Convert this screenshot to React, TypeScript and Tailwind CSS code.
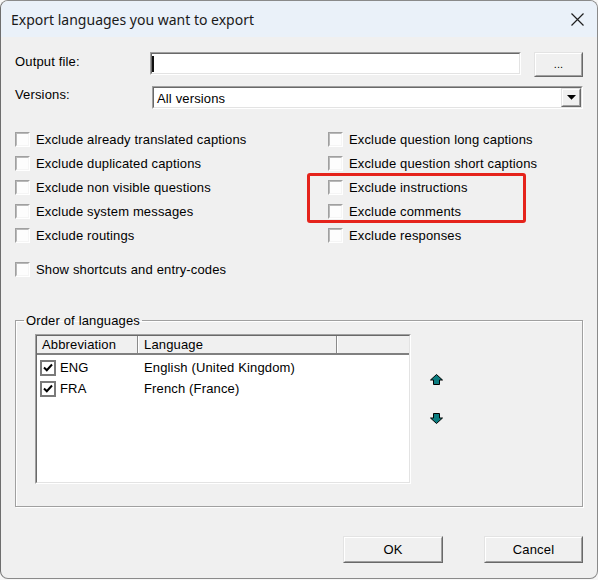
import React from "react";

const sunkenOuter =
  "border border-t-[#a0a0a0] border-l-[#a0a0a0] border-b-white border-r-white";
const sunkenInner =
  "border border-t-[#696969] border-l-[#696969] border-b-[#e3e3e3] border-r-[#e3e3e3]";
const raisedOuter =
  "border border-t-[#e3e3e3] border-l-[#e3e3e3] border-b-[#696969] border-r-[#696969]";
const raisedInner =
  "border border-t-white border-l-white border-b-[#a0a0a0] border-r-[#a0a0a0]";

function Check({ checked = false, big = false }: { checked?: boolean; big?: boolean }) {
  if (big) {
    return (
      <div className="w-[16px] h-[16px] border-2 border-[#7a7a7a] bg-white flex items-center justify-center shrink-0">
        {checked && (
          <svg width="10" height="9" viewBox="0 0 10 9">
            <path d="M1 4.5 L3.8 7.2 L9 1.5" fill="none" stroke="#000" strokeWidth="2" />
          </svg>
        )}
      </div>
    );
  }
  return (
    <div className={`w-[15px] h-[15px] shrink-0 ${sunkenOuter}`}>
      <div className="w-full h-full border border-t-[#b9b9b9] border-l-[#b9b9b9] border-b-[#f5f5f5] border-r-[#f5f5f5] bg-[#fdfdfd]" />
    </div>
  );
}

function CheckRow({ label }: { label: string }) {
  return (
    <div className="h-[24px] flex items-center gap-[6px]">
      <Check />
      <span>{label}</span>
    </div>
  );
}

function Button({ label, w }: { label: string; w: string }) {
  return (
    <div className={`${w} h-[27px] ${raisedOuter}`}>
      <div className={`w-full h-full ${raisedInner} flex items-center justify-center`}>{label}</div>
    </div>
  );
}

function Arrow({ down = false }: { down?: boolean }) {
  return (
    <svg width="13" height="11" viewBox="0 0 13 11" style={down ? { transform: "scaleY(-1)" } : undefined}>
      <polygon
        points="6.5,0.5 12.5,6 9.5,6 9.5,10.5 3.5,10.5 3.5,6 0.5,6"
        fill="#0b7c7f"
        stroke="#000"
        strokeWidth="1"
        strokeLinejoin="miter"
      />
    </svg>
  );
}

export default function App() {
  return (
    <div className="w-[598px] h-[580px] bg-[#f7f7f7] [font-family:'Liberation_Sans',Arial,sans-serif] text-[13px] leading-[15px] tracking-[0.15px] text-black">
      <div className="relative w-[598px] h-[579px] rounded-[8px] border border-[#8a8a8a] border-l-[#6e6e6e] bg-[#f0f0f0] overflow-hidden flex flex-col">
        {/* title bar */}
        <div className="h-[36px] shrink-0 bg-[#eaf1f9] flex items-center justify-between pl-[10px] pr-[13px]">
          <span className="[font-family:'Noto_Sans',sans-serif] text-[14px] tracking-normal leading-[20px] text-[#1a1a1a] mt-[1px]">
            Export languages you want to export
          </span>
          <svg width="13" height="13" viewBox="0 0 13 13">
            <path d="M0.5 0.5 L12.5 12.5 M12.5 0.5 L0.5 12.5" stroke="#1f1f1f" strokeWidth="1.2" />
          </svg>
        </div>

        {/* body */}
        <div className="flex flex-col pl-[14px] pr-[14px]">
          {/* output file */}
          <div className="flex items-start mt-[15px]">
            <div className="w-[135px] mt-[2px]">Output file:</div>
            <div className={`w-[371px] h-[23px] ${sunkenOuter}`}>
              <div className={`w-full h-full ${sunkenInner} bg-white flex items-center`}>
                <div className="w-[2px] h-[16px] bg-[#111] ml-[0px]" />
              </div>
            </div>
            <div className="ml-[13px]">
              <div className={`w-[49px] h-[25px] ${raisedOuter}`}>
                <div className={`w-full h-full ${raisedInner} flex items-center justify-center text-[11px]`}>
                  ...
                </div>
              </div>
            </div>
          </div>

          {/* versions */}
          <div className="flex items-start mt-[9px]">
            <div className="w-[137px] mt-[1px]">Versions:</div>
            <div className={`w-[431px] h-[23px] ${sunkenOuter}`}>
              <div className={`w-full h-full ${sunkenInner} bg-white flex items-center justify-between`}>
                <span className="pl-[3px] mt-[2px]">All versions</span>
                <div className={`w-[20px] h-[19px] ${raisedOuter}`}>
                  <div className={`w-full h-full ${raisedInner} bg-[#f0f0f0] flex items-center justify-center`}>
                    <svg width="9" height="5" viewBox="0 0 9 5">
                      <polygon points="0,0 9,0 4.5,4.8" fill="#000" />
                    </svg>
                  </div>
                </div>
              </div>
            </div>
          </div>

          {/* checkboxes */}
          <div className="grid grid-cols-[313px_1fr] mt-[18px]">
            <div className="flex flex-col">
              <CheckRow label="Exclude already translated captions" />
              <CheckRow label="Exclude duplicated captions" />
              <CheckRow label="Exclude non visible questions" />
              <CheckRow label="Exclude system messages" />
              <CheckRow label="Exclude routings" />
            </div>
            <div className="flex flex-col">
              <CheckRow label="Exclude question long captions" />
              <CheckRow label="Exclude question short captions" />
              <CheckRow label="Exclude instructions" />
              <CheckRow label="Exclude comments" />
              <CheckRow label="Exclude responses" />
            </div>
          </div>
          <div className="mt-[10px]">
            <CheckRow label="Show shortcuts and entry-codes" />
          </div>

          {/* group box */}
          <fieldset className="mt-[32px] w-[568px] border border-[#a0a0a0] shadow-[inset_1px_1px_0_#fff,1px_1px_0_#fff] p-0 m-0">
            <legend className="ml-[8px] px-[2px] leading-[15px]">Order of languages</legend>
            <div className="flex ml-[19px] mt-[6px] mb-[22px]">
              <div className={`w-[376px] h-[150px] ${sunkenOuter}`}>
                <div className={`w-full h-full ${sunkenInner} bg-white flex flex-col`}>
                  <div className="h-[19px] flex bg-[#f0f0f0] border-b-2 border-b-[#808080] shrink-0">
                    <div className="w-[101px] pl-[5px] flex items-center border-r border-r-[#8a8a8a] shadow-[1px_0_0_#fff]">
                      Abbreviation
                    </div>
                    <div className="w-[199px] pl-[5px] flex items-center border-l border-l-white border-r border-r-[#8a8a8a]">
                      Language
                    </div>
                    <div className="flex-1 border-l border-l-white" />
                  </div>
                  <div className="flex flex-col pt-[2px]">
                    <div className="h-[21px] flex items-center">
                      <div className="w-[101px] pl-[3px] flex items-center gap-[4px]">
                        <Check big checked />
                        <span>ENG</span>
                      </div>
                      <div className="pl-[6px]">English (United Kingdom)</div>
                    </div>
                    <div className="h-[21px] flex items-center">
                      <div className="w-[101px] pl-[3px] flex items-center gap-[4px]">
                        <Check big checked />
                        <span>FRA</span>
                      </div>
                      <div className="pl-[6px]">French (France)</div>
                    </div>
                  </div>
                </div>
              </div>
              <div className="ml-[19px] pt-[40px] flex flex-col gap-[28px]">
                <Arrow />
                <Arrow down />
              </div>
            </div>
          </fieldset>

          {/* buttons */}
          <div className="mt-[29px] flex justify-end gap-[41px]">
            <Button label="OK" w="w-[100px]" />
            <Button label="Cancel" w="w-[99px]" />
          </div>
        </div>

        {/* highlight annotation */}
        <div className="absolute left-[306px] top-[172px] w-[219px] h-[50px] border-[3px] border-[#e5231b] rounded-[3px]" />
      </div>
    </div>
  );
}
